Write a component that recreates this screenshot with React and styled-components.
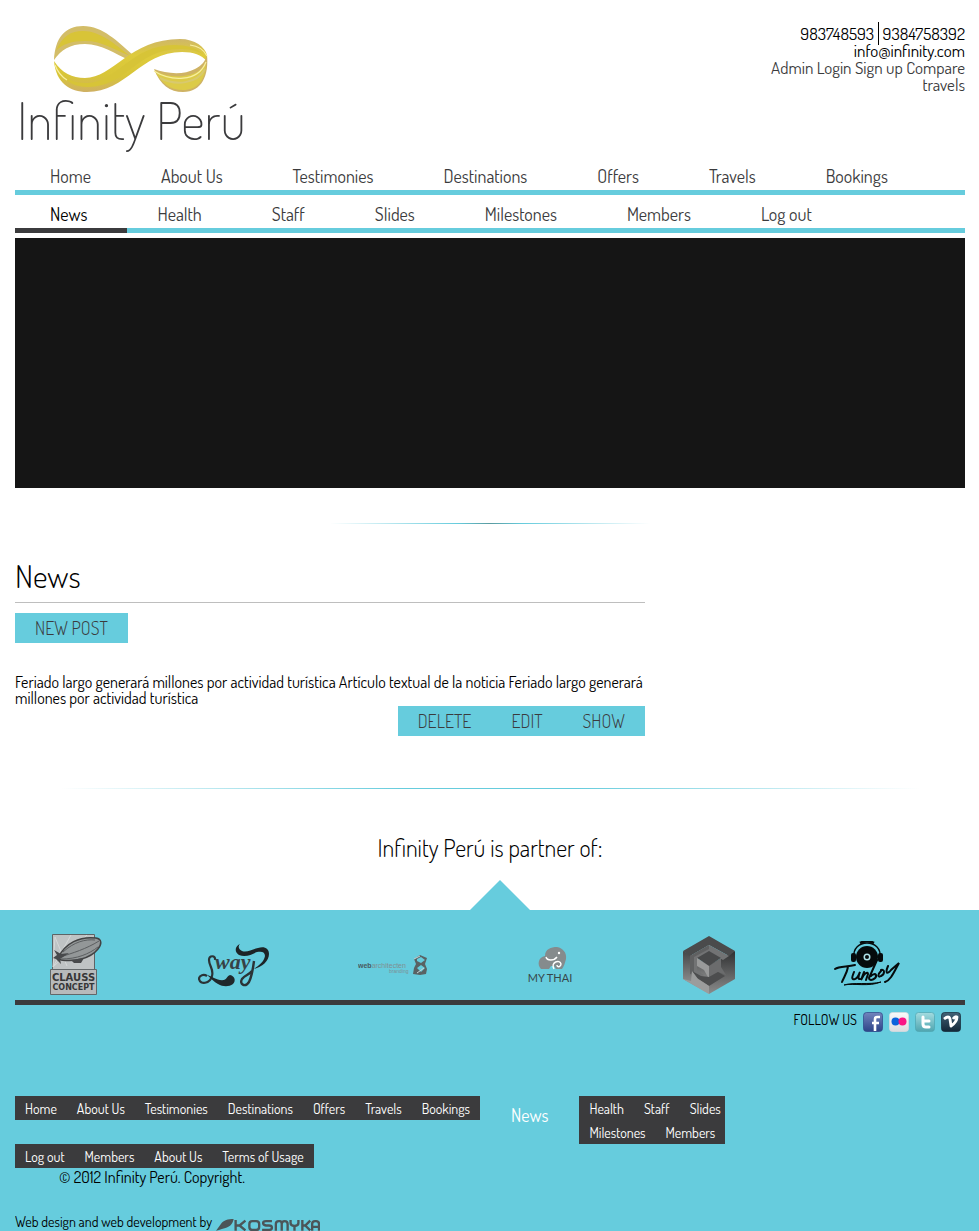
import React from "react";
import styled, { createGlobalStyle } from "styled-components";

const cyan = "#66ccdd";
const dark = "#3b3b3d";

const GlobalStyle = createGlobalStyle`
  * { box-sizing: border-box; }
  body {
    margin: 0;
    background: #fff;
    color: #000;
    font-family: Dosis, "Roboto Condensed", "Liberation Sans", sans-serif;
    font-size: 16px;
    line-height: 16px;
    font-weight: 400;
  }
  a { color: ${dark}; text-decoration: none; }
  ul, h1, h2, p { margin: 0; padding: 0; list-style: none; font-weight: 400; }
  svg { display: block; }
`;

const Shell = styled.div`
  padding: 0 14px 0 15px;
`;

const Header = styled.header`
  display: flex;
  justify-content: space-between;
  align-items: flex-start;
  height: 164px;
  padding-top: 22px;
`;

const Brand = styled.a`
  display: flex;
  flex-direction: column;
  padding-left: 2px;
`;

const Ribbon = styled.svg`
  margin-left: 35px;
`;

const Wordmark = styled.span`
  font-size: 52px;
  line-height: 48px;
  font-weight: 200;
`;

const Contact = styled.address`
  width: 200px;
  padding-top: 3px;
  font-size: 17px;
  font-style: normal;
  line-height: 17px;
  text-align: right;
`;

const Phone = styled.span`
  padding: ${(p) => (p.$divided ? "1px 0 1px 4px" : "0")};
  border-left: ${(p) => (p.$divided ? "1px solid #000" : "0")};
`;

const NavList = styled.ul`
  display: flex;
  height: ${(p) => (p.$tall ? 31 : 38)}px;
  border-bottom: 5px solid ${cyan};
`;

const NavItem = styled.li`
  display: flex;
  align-items: flex-end;
`;

const NavLink = styled.a`
  padding: 0 ${(p) => (p.$active ? 40 : 35)}px 4px 35px;
  margin-right: ${(p) => (p.$active ? -5 : 0)}px;
  margin-bottom: -5px;
  border-bottom: 5px solid ${(p) => (p.$active ? dark : "transparent")};
  color: ${(p) => (p.$active ? "#000" : dark)};
  font-size: 18px;
  line-height: 20px;
`;

const Hero = styled.section`
  height: 250px;
  margin-top: 5px;
  background: #151515;
`;

const Rule = styled.hr`
  width: ${(p) => (p.$wide ? 860 : 320)}px;
  max-width: 100%;
  height: 1px;
  margin: ${(p) => (p.$wide ? "52px" : "35px")} auto 0;
  border: 0;
  background: linear-gradient(to right, transparent, ${cyan} 40%, ${(p) => (p.$wide ? cyan : "#5a9a9f")} 50%, ${cyan} 60%, transparent);
`;

const Main = styled.main`
  width: 66.32%;
  padding-top: 34px;
`;

const Title = styled.h1`
  padding-bottom: 8px;
  margin-bottom: 10px;
  border-bottom: 1px solid #bebebe;
  font-size: 32px;
  line-height: 36px;
  font-weight: 300;
`;

const ButtonRow = styled.div`
  display: flex;
  justify-content: ${(p) => (p.$end ? "flex-end" : "flex-start")};
`;

const Button = styled.button`
  height: 30px;
  padding: 0 20px;
  border: 0;
  background: ${cyan};
  color: ${dark};
  font: inherit;
  font-size: 18px;
  font-weight: 300;
  line-height: 30px;
  cursor: pointer;
`;

const Post = styled.article`
  padding-top: 31px;
`;

const Partners = styled.h2`
  margin-top: 45px;
  font-size: 24px;
  line-height: 28px;
  font-weight: 300;
  text-align: center;
`;

const Pointer = styled.svg`
  margin: 18px 0 0 calc(50% - 20px);
`;

const Footer = styled.footer`
  padding: 20px 14px 0 15px;
  background: ${cyan};
`;

const Logos = styled.ul`
  display: grid;
  grid-template-columns: repeat(6, 1fr);
  height: 75px;
  border-bottom: 5px solid ${dark};
`;

const LogoCell = styled.li`
  display: flex;
  align-items: center;
  justify-content: center;
  padding-right: 36px;
`;

const Follow = styled.div`
  display: flex;
  justify-content: flex-end;
  align-items: flex-start;
  gap: 6px;
  padding: 7px 4px 0 0;
  font-size: 14px;
  line-height: 16px;
`;

const FooterNav = styled.nav`
  display: flex;
  align-items: flex-start;
  padding-top: 64px;
`;

const MenuColumn = styled.div`
  display: flex;
  flex-direction: column;
  align-items: flex-start;
  gap: 24px;
`;

const Menu = styled.ul`
  display: flex;
  flex-wrap: wrap;
  width: ${(p) => (p.$narrow ? "146px" : "auto")};
  background: ${dark};
`;

const MenuLink = styled.a`
  display: block;
  padding: 1px 10px 0;
  padding-right: ${(p) => (p.$tight ? 4 : 10)}px;
  color: #fff;
  font-size: 14px;
  line-height: 23px;
`;

const Current = styled.a`
  padding: 9px 31px 0;
  color: #fff;
  font-size: 18px;
  line-height: 20px;
`;

const Copyright = styled.p`
  padding-left: 44px;
  line-height: 18px;
`;

const Credit = styled.p`
  display: flex;
  align-items: flex-end;
  gap: 4px;
  height: 45px;
  overflow: hidden;
  font-size: 14px;
  line-height: 18px;
`;

const topLinks = ["Home", "About Us", "Testimonies", "Destinations", "Offers", "Travels", "Bookings"];
const subLinks = ["News", "Health", "Staff", "Slides", "Milestones", "Members", "Log out"];
const legalLinks = ["Log out", "Members", "About Us", "Terms of Usage"];
const sideLinks = ["Health", "Staff", "Slides", "Milestones", "Members"];

function Infinity() {
  return (
    <Ribbon width="160" height="74" viewBox="0 0 160 74" aria-hidden="true">
      <defs>
        <linearGradient id="gold" x1="0" y1="0" x2="0" y2="1">
          <stop offset="0" stopColor="#cfb768" />
          <stop offset=".3" stopColor="#decb3c" />
          <stop offset=".7" stopColor="#d8c538" />
          <stop offset="1" stopColor="#cfb064" />
        </linearGradient>
      </defs>
      <path fill="#d3bd68" d="M2 38C3 16 13 4 31 4c20 0 35 16 50 29l-4 5C63 32 50 22 33 22 18 22 9 28 2 38Z" />
      <path fill="#d8c437" d="M4 29C10 14 19 9 31 9c17 0 32 13 47 25C61 27 50 19 33 19 20 19 10 22 4 29Z" />
      <path fill="url(#gold)" d="M2 39c8 12 18 17 31 17 28 0 45-39 95-39 15 0 25 8 27 16v6c-6-6-13-9-25-9-42 0-55 40-95 40C18 70 4 61 2 39Z" />
      <path fill="#d7c437" d="M8 50c7 8 15 11 27 11 30 0 44-38 87-38 12 0 23 3 29 9-8-4-14-5-24-5-42 0-53 38-91 38-13 0-22-5-28-15Z" />
      <path fill="#cfb364" d="M102 47c13 5 30 6 41 0 6-3 10-7 12-14 2 20-5 37-24 37-13 0-23-7-29-23Z" />
      <path fill="#dccb48" d="M103 49c15 8 41 8 51-7-1 17-9 26-23 26-13 0-22-7-28-19Z" />
      <path d="M3 43c3 8 7 12 12 15M138 23c9 1 14 5 17 11M102 49c16 10 44 12 52-9" fill="none" stroke="#f8efa0" strokeWidth="1.2" />
      <path d="M108 56c16 8 37 6 45-9" fill="none" stroke="#d8c96e" strokeWidth="2" />
    </Ribbon>
  );
}

function Clauss() {
  return (
    <svg width="54" height="64" viewBox="0 0 54 64" role="img" aria-label="Clauss Concept">
      <path fill="#bfc3c4" stroke="#5d6466" d="M3.500 1.500h42v60h-42z" />
      <path d="m4 34 2-30 12 29M4 34 22 2M4 34 38 2" stroke="#d5d8d8" fill="none" />
      <path fill="#939798" stroke="#424344" strokeWidth="1.500" d="M9 25C16 10 31 3 47 5c6 1 6 6 2 11C41 26 25 29 12 27Z" />
      <path d="M11 24C24 20 37 16 50 8M12 26c16 0 28-5 37-12M14 19C25 9 36 6 46 7" stroke="#5b5e60" fill="none" />
      <path fill="#47494b" d="m5 17 7 4 8-1-9 6 1 5-5-5-3-1 4-3ZM22 27l13-2-3 5h-7Z" />
      <path fill="#b7babb" stroke="#626769" d="M1.500 36.500h46v25h-46z" />
      <text x="24.500" y="48" textAnchor="middle" fontFamily="DejaVu Sans" fontWeight="700" fontSize="10" fill="#363638">CLAUSS</text>
      <text x="24.500" y="57" textAnchor="middle" fontFamily="DejaVu Sans" fontWeight="700" fontSize="8" fill="#363638">CONCEPT</text>
    </svg>
  );
}

function Sway() {
  return (
    <svg width="72" height="44" viewBox="0 0 72 44" role="img" aria-label="Sway">
      <path fill="#1d2427" d="M42 1c-5 2-6 8-1 11 7 3 13-1 18-3 5-1 8 0 8 4-1 6-6 9-11 13 8-2 15-8 15-15 0-6-5-8-11-6-6 1-11 5-16 3-4-2-4-5-2-7Z" />
      <path fill="none" stroke="#2b3336" strokeWidth="2.200" d="M17 17c1-5-6-5-6 0 0 6 5 9 3 16-2 8-12 9-13 3 0-4 5-5 8-3" />
      <path fill="#20282b" d="M9 32c5 1 10 6 17 5 3-1 3-4 6-5 5 1 6 6 3 9-4 3-10 3-15 0-4-2-7-6-11-9Z" />
      <path fill="none" stroke="#2b3336" strokeWidth="2.400" d="M56 18c-1 8-2 15-5 21-4 6-10 2-7-3 3-4 7-4 10-8" />
      <text x="17" y="26" fontFamily="Liberation Serif" fontStyle="italic" fontWeight="700" fontSize="22" fill="#364246">way</text>
    </svg>
  );
}

function WebArchitect() {
  return (
    <svg width="70" height="22" viewBox="0 0 70 22" role="img" aria-label="webarchitecten branding">
      <text x="0" y="14" fontFamily="Liberation Sans" fontSize="7" fill="#7f8f92"><tspan fontWeight="700" fill="#485a5e">web</tspan>architecten</text>
      <text x="31" y="19" fontFamily="Liberation Sans" fontSize="5" fill="#7d9195">branding</text>
      <path fill="#596264" d="m56 5 6-4 7 3-2 6 2 5-1 5-6 1-7-1 1-6 2-4Z" />
      <path fill={cyan} d="m59 5 4-2 4 3-4 3-4-2Zm0 9 4-3 4 3-4 4Z" />
      <path d="m56 5 6-3M59 19l7-5" stroke="#c8d4d6" />
    </svg>
  );
}

function MyThai() {
  return (
    <svg width="50" height="36" viewBox="0 0 50 36" role="img" aria-label="My Thai">
      <path fill="#858b8d" d="M15 22c-4-4-3-12 4-13 0-7 6-9 12-9 6 1 10 6 9 12-1 4-2 7-4 10h-6l-2-3h-3l-2 3Z" />
      <path d="M20 10c1 4 8 4 11 0M28 22c-4-7 6-10 7-5 0 3-4 4-4 1" fill="none" stroke="#fff" strokeWidth="1.400" />
      <circle cx="33" cy="6" r="1.200" fill="#fff" />
      <text x="24" y="35" textAnchor="middle" fontFamily="Lato" fontSize="11" fill="#37474a">MY THAI</text>
    </svg>
  );
}

function Cube() {
  return (
    <svg width="52" height="58" viewBox="0 0 52 58" aria-hidden="true">
      <defs>
        <linearGradient id="steel" x1="0" y1="0" x2="0" y2="1"><stop stopColor="#444546" /><stop offset="1" stopColor="#a5a6a6" /></linearGradient>
        <linearGradient id="steelRight" x1="0" y1="0" x2="0" y2="1"><stop stopColor="#2f3031" /><stop offset="1" stopColor="#8b8c8c" /></linearGradient>
      </defs>
      <path fill="url(#steel)" d="M0 15 26 29v29L0 43Z" />
      <path fill="url(#steelRight)" d="M52 15 26 29v29l26-15Z" />
      <path fill="#4a4b4c" d="M26 0 52 15l-6 5L26 9 7 20l-7-5Z" />
      <path fill="#727374" d="m26 9 20 11-6 4-14-8-12 7v12l7 4-8 4-6-5V20Z" />
      <path fill="#5f6061" d="M7 20 26 9v4L11 21v16l-4 1Z" />
      <path fill="#48494a" d="m26 15 12 7-12 8-12-8Z" />
      <path fill="#999a9a" d="m14 22 12 8v13l-5-9-7-4Z" />
      <path fill="#6b6c6d" d="m26 30 12-8v9l5 8-8-3-9 5Z" />
      <path fill="#4c4d4e" d="m9 35 9 5 8 1 9-5 7 4-16 10-12-8Z" />
      <path fill="#9b9c9c" d="m9 35 6 8 11 7v8L0 43l8 2Z" />
    </svg>
  );
}

function Tunboy() {
  return (
    <svg width="68" height="48" viewBox="0 0 68 48" role="img" aria-label="Tunboy">
      <circle cx="33" cy="16" r="11" fill="#050b0c" />
      <path d="M20 17C17-3 49-3 46 17" fill="none" stroke="#050b0c" strokeWidth="1.400" />
      <path d="M26 2c4-2 10-2 14 0" fill="none" stroke="#050b0c" strokeWidth="2.600" />
      <rect x="17" y="12" width="5" height="9" rx="2" fill="#050b0c" />
      <rect x="44" y="12" width="5" height="9" rx="2" fill="#050b0c" />
      <circle cx="33" cy="16" r="3.500" fill="#aee2e9" />
      <circle cx="33" cy="16" r="2" fill="#050b0c" />
      <path d="M1 28c4-3 12-2 20-4M14 26c-1 6-4 10-6 15M20 31c-2 5-3 8 1 7 3-1 4-5 5-7-2 5-2 7 0 7M30 31l-3 8c3-7 7-9 7-6l-2 6M43 19l-8 18c0 4 8 1 7-3-1-2-4 0-5 1M47 30c-4 4-3 7 0 5 4-2 4-7 0-6M54 25c-3 7-1 9 3 4l8-7c-5 9-8 17-14 19" fill="none" stroke="#050b0c" strokeWidth="2" strokeLinecap="round" />
      <path d="M10 44c9-3 26 0 37-3-12 5-27 1-37 3Z" fill="#050b0c" stroke="#050b0c" />
    </svg>
  );
}

const SocialLink = styled.a`
  display: block;
`;

function Social({ name, id, top, bottom, children }) {
  return (
    <SocialLink href="#" aria-label={name}>
      <svg width="20" height="20" viewBox="0 0 20 20" aria-hidden="true">
        <defs><linearGradient id={id} x1="0" y1="0" x2="0" y2="1"><stop stopColor={top} /><stop offset="1" stopColor={bottom} /></linearGradient></defs>
        <rect x=".5" y=".5" width="19" height="19" rx="3" fill={`url(#${id})`} stroke={bottom} strokeOpacity=".7" />
        {children}
      </svg>
    </SocialLink>
  );
}

function Kosmyka() {
  return (
    <svg width="104" height="14" viewBox="0 0 106 14" role="img" aria-label="Kosmyka">
      <path fill="#4b5558" d="M0 14 5 7C8 3 12 2 18 2c-1 5-4 9-12 10l-3 1Z" />
      <path fill="none" stroke="#4b5558" strokeWidth="2.400" d="M20 3v11M21 8.500h3l6-5M24 8.500l6 5M37 4h4q3 0 3 3v3q0 3-3 3h-4q-3 0-3-3V7q0-3 3-3ZM57 4h-6q-3 0-3 2t3 2.500h3q3 0 3 2.200t-3 2.300h-7M61 14V7q0-3 3-3h1q2 0 2 3v7M67 7q0-3 3-3t3 3v7M76 3v3q0 3 4 3t4-3V3M80 9v5M88 3v11M89 8.500h2l5-5M91 8.500l5 5M98 14V7q0-3 3-3h1q3 0 3 3v7M98 10h7" />
    </svg>
  );
}

export default function App() {
  return (
    <>
      <GlobalStyle />
      <Shell>
        <Header>
          <Brand href="#"><Infinity /><Wordmark>Infinity Perú</Wordmark></Brand>
          <Contact>
            <Phone>983748593</Phone> <Phone $divided>9384758392</Phone><br />
            info@infinity.com<br />
            <a href="#">Admin Login</a> <a href="#">Sign up</a> <a href="#">Compare travels</a>
          </Contact>
        </Header>
        <nav aria-label="Main">
          <NavList $tall>
            {topLinks.map((t) => <NavItem key={t}><NavLink href="#">{t}</NavLink></NavItem>)}
          </NavList>
          <NavList>
            {subLinks.map((t) => <NavItem key={t}><NavLink href="#" $active={t === "News"}>{t}</NavLink></NavItem>)}
          </NavList>
        </nav>
        <Hero />
        <Rule />
        <Main>
          <Title>News</Title>
          <ButtonRow><Button>NEW POST</Button></ButtonRow>
          <Post>
            <p>Feriado largo generará millones por actividad turística Artículo textual de la noticia Feriado largo generará millones por actividad turística</p>
            <ButtonRow $end><Button>DELETE</Button><Button>EDIT</Button><Button>SHOW</Button></ButtonRow>
          </Post>
        </Main>
        <Rule $wide />
        <Partners>Infinity Perú is partner of:</Partners>
      </Shell>
      <Pointer width="60" height="30" viewBox="0 0 60 30" aria-hidden="true"><path fill={cyan} d="M30 0 60 30H0Z" /></Pointer>
      <Footer>
        <Logos>
          <LogoCell><Clauss /></LogoCell>
          <LogoCell><Sway /></LogoCell>
          <LogoCell><WebArchitect /></LogoCell>
          <LogoCell><MyThai /></LogoCell>
          <LogoCell><Cube /></LogoCell>
          <LogoCell><Tunboy /></LogoCell>
        </Logos>
        <Follow>
          FOLLOW US
          <Social name="Facebook" id="fb" top="#7284bd" bottom="#2d4488"><path d="M17 5h-3q-2 0-2 2v12M9 11h7" fill="none" stroke="#fff" strokeWidth="2.600" /></Social>
          <Social name="Flickr" id="fl" top="#fafafa" bottom="#dcdcdf"><circle cx="6.500" cy="9.500" r="4" fill="#0b63dc" /><circle cx="13.500" cy="9.500" r="4" fill="#fa1585" /></Social>
          <Social name="Twitter" id="tw" top="#a3dce0" bottom="#4fa5b0"><path d="M8 5v7q0 3 3 3h3M8 9h6" fill="none" stroke="#fff" strokeWidth="3" strokeLinecap="round" /></Social>
          <Social name="Vimeo" id="vi" top="#426276" bottom="#132838"><path d="M3 7q5-4 6 0l1 7q6-4 6-9-2-1-4 2" fill="none" stroke="#fff" strokeWidth="2.800" strokeLinejoin="round" /></Social>
        </Follow>
        <FooterNav aria-label="Footer">
          <MenuColumn>
            <Menu>{topLinks.map((t) => <li key={t}><MenuLink href="#">{t}</MenuLink></li>)}</Menu>
            <Menu>{legalLinks.map((t) => <li key={t}><MenuLink href="#">{t}</MenuLink></li>)}</Menu>
          </MenuColumn>
          <Current href="#">News</Current>
          <Menu $narrow>{sideLinks.map((t) => <li key={t}><MenuLink href="#" $tight={t === "Slides"}>{t}</MenuLink></li>)}</Menu>
        </FooterNav>
        <Copyright>© 2012 Infinity Perú. Copyright.</Copyright>
        <Credit>Web design and web development by <a href="#"><Kosmyka /></a></Credit>
      </Footer>
    </>
  );
}
